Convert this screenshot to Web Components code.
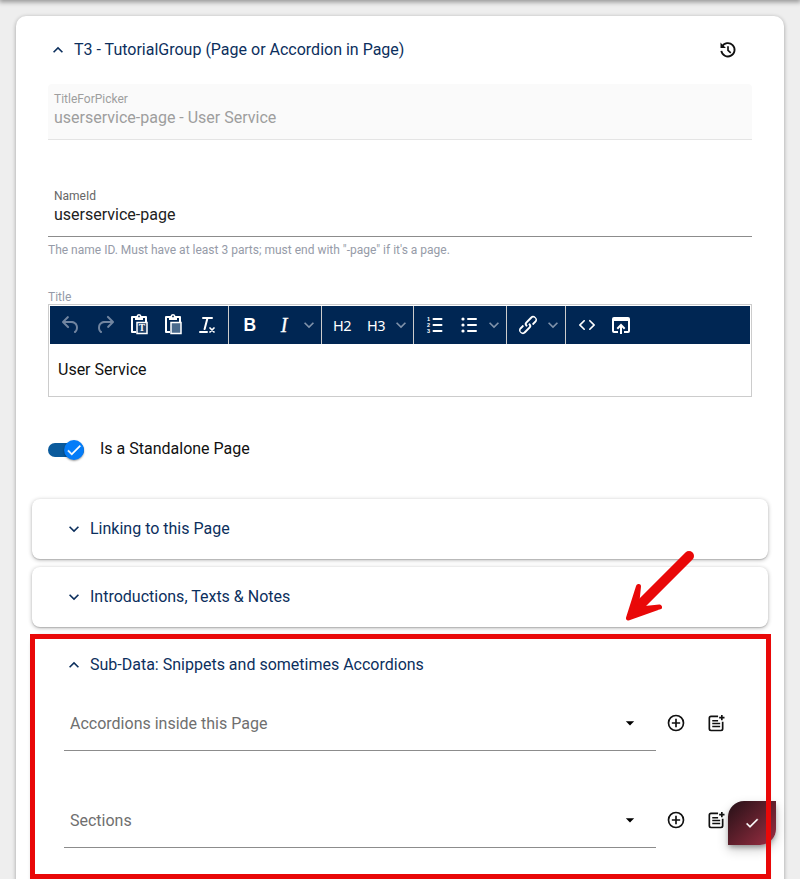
<!DOCTYPE html>
<html lang="en">
<head>
<meta charset="utf-8">
<title>Edit TutorialGroup</title>
<style>
html, body { margin: 0; height: 879px; overflow: hidden; background: #eee; font-family: Roboto, "Liberation Sans", sans-serif; font-size: 16px; }
</style>
</head>
<body>
<edit-dialog></edit-dialog>
<script>
const ICONS = {
  up: '<path d="M7.4 15.4 12 10.8l4.6 4.6L18 14l-6-6-6 6z"/>',
  down: '<path d="M7.4 8.6 12 13.2l4.6-4.6L18 10l-6 6-6-6z"/>',
  caret: '<path d="M7 10l5 5 5-5z"/>',
  history: '<path d="M4.800 8A8 8 0 1 1 4 13" fill="none" stroke="currentColor" stroke-width="2.200"/><path d="M3 3 5.200 5.300 8 8 9.500 9.500H3z"/><path d="M12 7.500v4.900l3.300 3" fill="none" stroke="currentColor" stroke-width="2"/>',
  add: '<path d="M13 7h-2v4H7v2h4v4h2v-4h4v-2h-4V7zm-1-5a10 10 0 1 0 0 20 10 10 0 0 0 0-20zm0 18a8 8 0 1 1 0-16 8 8 0 0 1 0 16z"/>',
  postadd: '<path d="M14.500 4H6a2 2 0 0 0-2 2v13a2 2 0 0 0 2 2h12a2 2 0 0 0 2-2v-8.500" fill="none" stroke="currentColor" stroke-width="2"/><path d="M7.500 8.300h7v1.800h-7zM7.500 11.700h9.500v1.800H7.500zM7.500 15.200h9.500V17H7.500zM18 2.300h2v2.200h2.200v2H20v2.200h-2V6.500h-2.200v-2H18z"/>',
  check: '<path d="M9 16.200 4.800 12l-1.400 1.400L9 19 21 7l-1.400-1.400z" stroke="currentColor" stroke-width=".5"/>',
  undo: '<path d="M6.400 8H12c3.700 0 6.200 2 6.800 5.100.6 2.700-.4 5.600-2.300 6.800a1 1 0 0 1-1-1.800c1.100-.6 1.800-2.700 1.400-4.600-.5-2.100-2.100-3.500-4.900-3.500H6.400l3.300 3.300a1 1 0 1 1-1.400 1.400l-5-5a1 1 0 0 1 0-1.400l5-5a1 1 0 0 1 1.400 1.400L6.400 8Z"/>',
  redo: '<path d="M17.600 10H12c-2.800 0-4.400 1.400-4.900 3.500-.4 2 .3 4 1.400 4.600a1 1 0 1 1-1 1.800c-2-1.200-2.900-4.100-2.300-6.800.6-3 3-5.100 6.800-5.100h5.600l-3.300-3.300a1 1 0 1 1 1.400-1.400l5 5a1 1 0 0 1 0 1.400l-5 5a1 1 0 0 1-1.400-1.400l3.300-3.300Z"/>',
  paste: '<path d="M8 4H5v15h4M16 4h3v5" fill="none" stroke="currentColor" stroke-width="2" stroke-linejoin="round"/><path d="M8 3h1.500a2.600 2.600 0 0 1 5 0H16v4H8z"/><circle cx="12" cy="3.400" r=".9" fill="#002653"/><path d="M10 9.500h10v11H10z" fill="#4a6a8c" stroke="currentColor" stroke-width="1.500"/>',
  pasteText: '<path d="M8 4H5v15h4M16 4h3v5" fill="none" stroke="currentColor" stroke-width="2" stroke-linejoin="round"/><path d="M8 3h1.500a2.600 2.600 0 0 1 5 0H16v4H8z"/><circle cx="12" cy="3.400" r=".9" fill="#002653"/><path d="M10 9.500h10v11H10z" fill="#1d4069" stroke="currentColor" stroke-width="1.500"/><text x="15" y="18.300" text-anchor="middle" font-family="Liberation Serif, serif" font-weight="700" font-size="9.500">T</text>',
  clear: '<path d="M13.200 6v.2l-2.600 10a1 1 0 0 1-1 .8h-.2a.8.8 0 0 1-.8-1l2.600-10H8a1 1 0 1 1 0-2h9a1 1 0 0 1 0 2h-3.800ZM5 18h7a1 1 0 0 1 0 2H5a1 1 0 0 1 0-2Z"/><path d="m15 15 4 4m0-4-4 4" stroke="currentColor" stroke-width="1.700" stroke-linecap="round"/>',
  ol: '<path d="M10.500 6h8M10.500 12h8M10.500 18h8" stroke="currentColor" stroke-width="2" stroke-linecap="round"/><g font-size="5.500" font-weight="700" font-family="Liberation Sans, sans-serif"><text x="4" y="8">1</text><text x="4" y="14">2</text><text x="4" y="20">3</text></g>',
  ul: '<path d="M11 6h8M11 12h8M11 18h8" stroke="currentColor" stroke-width="2" stroke-linecap="round"/><circle cx="6" cy="6" r="1.600"/><circle cx="6" cy="12" r="1.600"/><circle cx="6" cy="18" r="1.600"/>',
  link: '<path d="M6.200 12.300a1 1 0 0 1 1.400 1.400l-2 2a2 2 0 1 0 2.600 2.800l4.800-4.800a1 1 0 0 0 0-1.400 1 1 0 1 1 1.400-1.300 2.900 2.900 0 0 1 0 4L9.600 20a3.900 3.900 0 0 1-5.500-5.500l2-2Zm11.600-.6a1 1 0 0 1-1.400-1.400l2-2a2 2 0 1 0-2.600-2.800L11 10.300a1 1 0 0 0 0 1.400A1 1 0 1 1 9.600 13a2.900 2.900 0 0 1 0-4L14.400 4a3.900 3.900 0 0 1 5.500 5.500l-2 2Z"/>',
  code: '<path d="M9.800 15.700c.3.3.3.8 0 1-.3.4-.9.4-1.200 0l-4.400-4.100a.8.8 0 0 1 0-1.200l4.400-4.200c.3-.3.9-.3 1.200 0 .3.3.3.8 0 1.100L6 12l3.800 3.700ZM14.200 15.700c-.3.3-.3.8 0 1 .4.4.9.4 1.200 0l4.400-4.100c.3-.3.3-.9 0-1.200l-4.400-4.200a.8.8 0 0 0-1.200 0c-.3.3-.3.8 0 1.100L18 12l-3.800 3.700Z"/>',
  open: '<path d="M5 4h14a2 2 0 0 1 2 2v12a2 2 0 0 1-2 2h-4v-2h4V8H5v10h4v2H5a2 2 0 0 1-2-2V6a2 2 0 0 1 2-2z"/><path d="M12 21v-9m-3.700 3.700L12 12l3.700 3.700" fill="none" stroke="currentColor" stroke-width="2"/>'
};
const define = (name, render) => customElements.define(name, class extends HTMLElement {
  connectedCallback() {
    if (!this.shadowRoot) this.attachShadow({ mode: 'open' }).innerHTML = render(this);
  }
});

define('ui-icon', el => `
<style>:host{display:block;flex:none;width:${el.getAttribute('size') || 24}px;height:${el.getAttribute('size') || 24}px} svg{display:block;width:100%;height:100%;fill:currentColor}</style>
<svg viewBox="0 0 24 24">${ICONS[el.getAttribute('name')]}</svg>`);

define('section-title', el => `
<style>:host{display:flex;align-items:center;gap:6px;height:24px;color:#0c2f5d;line-height:24px} ui-icon{margin-left:-2px}</style>
<ui-icon size="20" name="${el.hasAttribute('open') ? 'up' : 'down'}"></ui-icon><span><slot></slot></span>`);

define('text-field', el => `
<style>
:host{display:flex;flex-direction:column;box-sizing:border-box;height:56px;padding:7px 6px 0;border-bottom:1px solid #8c8c8c;color:#212121}
:host([disabled]){background:#fafafa;border-color:#e4e4e4;border-radius:4px 4px 0 0;color:#9e9e9e}
label{font-size:12px;line-height:16px;color:#666}
:host([disabled]) label{color:#9e9e9e}
span{line-height:20px;padding-top:1px}
</style><label>${el.getAttribute('label')}</label><span><slot></slot></span>`);

define('tool-group', () => `
<style>:host{display:flex;align-items:center;box-sizing:border-box;height:38px;border-right:1px solid #ccc;padding-left:4px} :host(:last-child){border:0;flex:1}</style><slot></slot>`);

define('tool-button', el => `
<style>
:host{display:flex;align-items:center;justify-content:center;width:34px;height:34px;color:#fff}
:host([dim]){color:#7185a0}
:host([narrow]){width:16px;color:#7f92aa}
.b{font:700 19px/24px "Liberation Sans",sans-serif;transform:scaleX(.92)}
.i{font:italic 400 20px/24px "Liberation Serif",serif;-webkit-text-stroke:.3px #fff}
.h{font:14.500px/24px "Noto Sans",sans-serif;letter-spacing:-.5px}
</style>${el.hasAttribute('icon') ? `<ui-icon size="${el.getAttribute('size') || 24}" name="${el.getAttribute('icon')}"></ui-icon>` : `<span class="${el.getAttribute('kind')}"><slot></slot></span>`}`);

define('rich-editor', () => `
<style>
:host{display:block;box-sizing:border-box;height:93px;border:1px solid #ccc;padding:1px;color:#111}
.bar{display:flex;height:38px;background:#002653}
.text{padding:14px 8px;line-height:24px}
.g1{width:179px;padding-left:4px}.g2,.g4{width:93px}.g3{width:92px;padding-left:3px}.g5{width:59px}
</style>
<div class="bar">
<tool-group class="g1"><tool-button icon="undo" dim></tool-button><tool-button icon="redo" dim></tool-button><tool-button icon="pasteText"></tool-button><tool-button icon="paste"></tool-button><tool-button icon="clear"></tool-button></tool-group>
<tool-group class="g2"><tool-button kind="b">B</tool-button><tool-button kind="i">I</tool-button><tool-button icon="down" size="20" narrow></tool-button></tool-group>
<tool-group class="g3"><tool-button kind="h">H2</tool-button><tool-button kind="h">H3</tool-button><tool-button icon="down" size="20" narrow></tool-button></tool-group>
<tool-group class="g4"><tool-button icon="ol"></tool-button><tool-button icon="ul"></tool-button><tool-button icon="down" size="20" narrow></tool-button></tool-group>
<tool-group class="g5"><tool-button icon="link"></tool-button><tool-button icon="down" size="20" narrow></tool-button></tool-group>
<tool-group><tool-button icon="code"></tool-button><tool-button icon="open"></tool-button></tool-group>
</div><div class="text"><slot></slot></div>`);

define('slide-toggle', () => `
<style>
:host{display:flex;align-items:center;gap:16px;height:24px;color:#111}
.track{display:flex;align-items:center;justify-content:flex-end;width:36px;height:14px;border-radius:7px;background:#0a5a9c;margin-top:2px}
.thumb{display:flex;align-items:center;justify-content:center;flex:none;width:20px;height:20px;border-radius:50%;background:#047cf8;color:#fff;box-shadow:0 1px 2px #0006}
span{padding-bottom:2px}
</style><div class="track"><div class="thumb"><ui-icon name="check" size="18"></ui-icon></div></div><span><slot></slot></span>`);

define('panel-card', () => `
<style>:host{display:block;box-sizing:border-box;height:60px;padding:18px 34px;background:#fff;border-radius:8px;box-shadow:0 1px 4px #0000004d,0 1px 1px #0002}</style><slot></slot>`);

define('picker-row', () => `
<style>
:host{display:flex;height:56px;align-items:center}
.f{display:flex;box-sizing:border-box;align-items:center;justify-content:space-between;width:592px;height:56px;padding:1px 16px 0 6px;border-bottom:1px solid #8c8c8c;color:#6f6f6f}
.c{color:#000}
.a{display:flex;gap:20px;padding-left:10px;color:#111}
</style><div class="f"><slot></slot><ui-icon class="c" name="caret" size="20"></ui-icon></div><div class="a"><ui-icon name="add" size="20"></ui-icon><ui-icon name="postadd" size="20"></ui-icon></div>`);

define('save-button', () => `
<style>:host{display:flex;align-items:center;justify-content:center;width:48px;height:44px;border-radius:16px 0 16px 0;background:linear-gradient(135deg,#241016,#9c2f43);color:#fff;box-shadow:0 3px 5px -1px #0005,0 5px 12px #0003}</style><ui-icon name="check" size="16"></ui-icon>`);

define('red-marker', () => `
<style>:host{display:block;pointer-events:none} svg{display:block}</style>
<svg width="800" height="879" fill="none" stroke="#e90808"><rect x="32.500" y="636.500" width="736" height="240" stroke-width="5"/><path d="M689 556 638 607" stroke-width="10" stroke-linecap="round"/><path d="M638.500 586.500 628.500 618 659.500 607 645 608.500 637 601Z" fill="#e90808" stroke-width="5" stroke-linejoin="round"/></svg>`);

define('edit-dialog', () => `
<style>
:host{display:block;position:relative;box-sizing:border-box;height:879px;padding:16px 16px 0;background:#eee;overflow:hidden}
.top{position:absolute;left:0;right:0;top:-5px;height:5px;box-shadow:0 1px 5px 1px #0006}
.card{display:flex;flex-direction:column;box-sizing:border-box;height:900px;padding:22px 16px 0;background:#fff;border-radius:10px;box-shadow:0 1px 4px #0005}
.head{display:flex;justify-content:space-between;align-items:center;padding:0 30px 0 18px;height:24px}
.head ui-icon{color:#111}
.body{display:flex;flex-direction:column;padding:22px 16px 0}
.name{margin-top:41px}
.hint{font-size:12px;line-height:16px;color:#969ba8;margin-top:5px}
.label{font-size:12px;line-height:16px;color:#969ba8;margin-top:31px;height:15px}
.toggle{margin-top:40px}
.panels{display:flex;flex-direction:column;gap:8px;margin-top:38px}
.sub{height:280px;padding:18px 32px 0}
.sub section-title{padding-left:2px}
.first{margin-top:18px}.second{margin-top:41px}
save-button{position:absolute;left:728px;top:801px}
red-marker{position:absolute;left:0;top:0}
</style>
<div class="top"></div>
<div class="card">
<div class="head"><section-title open>T3 - TutorialGroup (Page or Accordion in Page)</section-title><ui-icon name="history" size="20"></ui-icon></div>
<div class="body">
<text-field label="TitleForPicker" disabled>userservice-page - User Service</text-field>
<text-field class="name" label="NameId">userservice-page</text-field>
<div class="hint">The name ID. Must have at least 3 parts; must end with "-page" if it's a page.</div>
<div class="label">Title</div>
<rich-editor>User Service</rich-editor>
<slide-toggle class="toggle">Is a Standalone Page</slide-toggle>
</div>
<div class="panels">
<panel-card><section-title>Linking to this Page</section-title></panel-card>
<panel-card><section-title>Introductions, Texts &amp; Notes</section-title></panel-card>
<panel-card class="sub"><section-title open>Sub-Data: Snippets and sometimes Accordions</section-title>
<picker-row class="first">Accordions inside this Page</picker-row><picker-row class="second">Sections</picker-row></panel-card>
</div>
</div>
<save-button></save-button><red-marker></red-marker>`);
</script>
</body>
</html>
